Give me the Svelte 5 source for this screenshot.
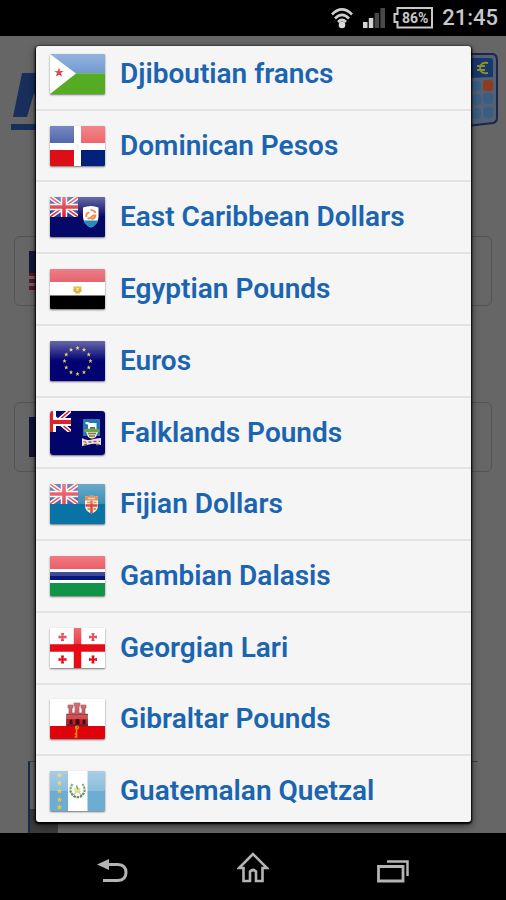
<script>
  const currencies = [
    { flag: 'dj', name: 'Djiboutian francs' },
    { flag: 'do', name: 'Dominican Pesos' },
    { flag: 'ai', name: 'East Caribbean Dollars' },
    { flag: 'eg', name: 'Egyptian Pounds' },
    { flag: 'eu', name: 'Euros' },
    { flag: 'fk', name: 'Falklands Pounds' },
    { flag: 'fj', name: 'Fijian Dollars' },
    { flag: 'gm', name: 'Gambian Dalasis' },
    { flag: 'ge', name: 'Georgian Lari' },
    { flag: 'gi', name: 'Gibraltar Pounds' },
    { flag: 'gt', name: 'Guatemalan Quetzal' }
  ];

  const euStars = Array.from({ length: 12 }, (_, i) => {
    const a = (i * Math.PI) / 6;
    return { x: 27.5 + 13 * Math.sin(a), y: 20 - 13 * Math.cos(a) };
  });
</script>

{#snippet unionJack(w, h)}
  <svg x="0" y="0" width={w} height={h} viewBox="0 0 28 20" preserveAspectRatio="none">
    <rect width="28" height="20" fill="#29358c" />
    <path d="M0 0L28 20M28 0L0 20" stroke="#fff" stroke-width="4.4" />
    <path d="M0 0L28 20M28 0L0 20" stroke="#d8242f" stroke-width="1.5" />
    <path d="M14 0V20M0 10H28" stroke="#fff" stroke-width="6.4" />
    <path d="M14 0V20M0 10H28" stroke="#dc2030" stroke-width="3.6" />
  </svg>
{/snippet}

{#snippet flagArt(code)}
  {#if code === 'dj'}
    <rect width="55" height="20" fill="#4d80c6" />
    <rect y="19" width="55" height="21" fill="#55ab22" />
    <path d="M0 0L26 19.5L0 40Z" fill="#fff" />
    <path d="M9 13.5l1.2 3.4h3.6l-2.9 2.2 1 3.5L9 20.5l-2.9 2.1 1-3.5-2.9-2.2h3.6z" fill="#e01a2b" />
  {:else if code === 'do'}
    <rect width="55" height="40" fill="#fff" />
    <rect width="24" height="17" fill="#1d3a94" />
    <rect x="31" width="24" height="17" fill="#e8383f" />
    <rect y="24" width="24" height="16" fill="#dc0f18" />
    <rect x="31" y="24" width="24" height="16" fill="#00217e" />
    <rect x="26" y="18.5" width="3" height="4" fill="#f2f0f2" />
  {:else if code === 'ai'}
    <rect width="55" height="40" fill="#040868" />
    {@render unionJack(28, 20)}
    <path d="M33 10.500Q41 7.500 48.500 10.500V20Q48 27.500 41 30.500Q33.500 27.500 33 20Z" fill="#fff" />
    <path d="M33.500 23.500H48.300Q46.500 28.500 41 30.500Q35.500 28.500 33.500 23.500Z" fill="#238bc0" />
    <path d="M36.500 20q-1-4 3-4.500m1-2.500q4 0 5 3m0 1.500q0 4-4 4.500m-4-1q2 1.500 4-1t3-1" fill="none" stroke="#ef8a4a" stroke-width="2" />
  {:else if code === 'eg'}
    <rect width="55" height="13.500" fill="#de2a39" />
    <rect y="13" width="55" height="14" fill="#fff" />
    <rect y="26.500" width="55" height="13.500" fill="#000" />
    <path d="M23.500 17q1.500 1.500 4 0q2.500 1.500 4 0v6h-2l.500 1.500h-5l.500-1.500h-2z" fill="#d9b031" />
    <path d="M26.500 19h2v3h-2z" fill="#f3e3a6" />
  {:else if code === 'eu'}
    <rect width="55" height="40" fill="#020273" />
    {#each euStars as s}
      <path transform="translate({s.x} {s.y})" d="M0-2.200L.6-.7 2.100-.7.9.3 1.400 1.900 0 1-1.400 1.900-.9.3-2.100-.7-.6-.7Z" fill="#e4cc4c" />
    {/each}
  {:else if code === 'fk'}
    <rect width="55" height="44" fill="#03046a" />
    <g clip-path="url(#fk-canton)">
      <path d="M-6 -2L22 22M22 -2L-6 22" stroke="#fff" stroke-width="4.500" />
      <path d="M-6 -2L22 22M22 -2L-6 22" stroke="#e0202a" stroke-width="1.500" />
      <path d="M2 0V21M0 11H21" stroke="#fff" stroke-width="8" />
      <path d="M1 0V21M0 11H21" stroke="#e0202a" stroke-width="4" />
    </g>
    <clipPath id="fk-canton"><rect width="21" height="21" /></clipPath>
    <rect x="33" y="8" width="17" height="17" fill="#2377b8" />
    <path d="M35.500 11h2.500l1.500 1h7v6h-1.500v-2h-5v2H38v-4.500l-2.500-.500z" fill="#fff" />
    <path d="M34 18.500q8-2 15.500 0V21H34z" fill="#79a342" />
    <path d="M36 21h12l-2 5q-4 3-8 0z" fill="#ede4c0" />
    <path d="M38 22.500h8M39 25h6" stroke="#7c7854" stroke-width="1.300" />
    <path d="M32 27q4 3 9.500 1.500T51 27v7q-5-2-9.500-1T32 35z" fill="#ece3df" />
    <path d="M33.500 30.500l3 1m2-.500h3m2-.500h3m2-.500l1.500.500M34 33.500h3m9 0h3" stroke="#a05e62" stroke-width="1.300" />
  {:else if code === 'fj'}
    <rect width="55" height="40" fill="#0873a4" />
    {@render unionJack(28, 20)}
    <path d="M35 12.500q6.500-1.500 13 0v10q-.500 5-6.500 7q-6-2-6.500-7z" fill="#f8eadc" />
    <path d="M35 12.500q6.500-1.500 13 0v4H35z" fill="#df652f" />
    <path d="M38 14.500h7" stroke="#f6c65d" stroke-width="1.500" />
    <path d="M41.500 16.500V29M35.500 21.500h12" stroke="#e34535" stroke-width="2.500" />
    <path d="M37 18.500h3m3.500 0h3M37.500 25h2.500m3.500 0h2.500" stroke="#a08a48" stroke-width="1.700" />
  {:else if code === 'gm'}
    <rect width="55" height="40" fill="#fff" />
    <rect width="55" height="13" fill="#e5222e" />
    <rect y="16" width="55" height="8" fill="#07187c" />
    <rect y="27" width="55" height="13" fill="#129448" />
  {:else if code === 'ge'}
    <rect width="55" height="40" fill="#fff" />
    <path d="M27.500 0V40M0 20H55" stroke="#e50c18" stroke-width="7.500" />
    {#each [[12.500, 9], [43, 9], [12.500, 31.500], [43, 31.500]] as [x, y]}
      <path transform="translate({x} {y})" d="M-1.600-4h3.200L1-1 4-1.600v3.200L1 1l.6 3h-3.200L-1 1l-3 .6v-3.200L-1-1z" fill="#e50c18" />
    {/each}
  {:else if code === 'gi'}
    <rect width="55" height="40" fill="#fff" />
    <rect y="27" width="55" height="13" fill="#e0030c" />
    <path d="M16.500 27V15h2.500V9h-1V6h5v3h-1v5h3V7h-1V4h6v3h-1v7h3V9h-1V6h5v3h-1v6h2.500v12z" fill="#c71c23" stroke="#66272a" stroke-width=".7" />
    <path d="M17 15.500h21M17 26h21" stroke="#5a1517" />
    <path d="M19.500 25v-3.500q1.500-2 3 0V25zM25.500 25.500V21q2-2.500 4 0v4.500zM32.500 25v-3.500q1.500-2 3 0V25z" fill="#351214" />
    <path d="M26.500 27v11h-2M26.500 35h-2" fill="none" stroke="#e58b13" stroke-width="1.600" />
    <circle cx="27" cy="28.500" r="1.500" fill="none" stroke="#e58b13" stroke-width="1.200" />
  {:else if code === 'gt'}
    <rect width="55" height="40" fill="#6dadd2" />
    <rect x="18" width="19.500" height="40" fill="#fff" />
    {#each [4, 12, 20, 28.500, 36] as y}
      <path transform="translate(9.500 {y})" d="M0-2.800L.8-.8 2.900-.8 1.200.6 1.800 2.600 0 1.400-1.800 2.600-1.200.6-2.900-.8-.8-.8Z" fill="#e8c93c" />
    {/each}
    <path d="M22.500 13q-5 7.500 2 12.500q3 1.500 6 0q7-5 2-12.500" fill="none" stroke="#5d8f57" stroke-width="2.200" stroke-dasharray="2.500 .8" />
    <path d="M23.500 24l7-7m1 7l-7-7" stroke="#a8a26c" />
    <path d="M24 18.500l3-3 4 5.500-6 1z" fill="#ecd77c" />
    <path d="M26.500 14.500l1.500 4" stroke="#39985e" stroke-width="1.500" />
  {/if}
{/snippet}

<div class="phone">
  <header class="status">
    <svg class="wifi" viewBox="0 0 22 21" aria-label="Wi-Fi">
      <g fill="none" stroke="#cfcfcf" stroke-width="2.600">
        <path d="M1 6.500q10-10 20 0" />
        <path d="M4 10.500q7-7 14 0" />
        <path d="M7 14q4-4 8 0" />
      </g>
      <circle cx="11" cy="17" r="3.300" fill="#dcdcdc" />
    </svg>
    <svg class="signal" viewBox="0 0 22 20" aria-label="Signal">
      <path d="M0 14h4.500v6H0zM5.800 10h4.500v10H5.800z" fill="#d4d4d4" />
      <path d="M11.600 5h4.500v15h-4.500zM17.400 0H22v20h-4.600z" fill="#484848" />
    </svg>
    <span class="battery">
      <svg viewBox="0 0 40 22" aria-hidden="true">
        <path d="M4.500 1H39v19.500H4.500V15H1.500V7h3z" fill="none" stroke="#c9c9c9" stroke-width="2" />
      </svg>
      <span>86%</span>
    </span>
    <time>21:45</time>
  </header>

  <main class="stage">
    <div class="app" aria-hidden="true">
      <div class="banner">
        <svg class="logo" viewBox="0 0 60 58">
          <path d="M11 0H28L38 25 51 0H60V44H46L48 22 38 44H31L23 20 16 44H2Z" fill="#182f5c" />
          <path d="M0 51H60V57H0Z" fill="#182f5c" />
        </svg>
        <svg class="calculator" viewBox="0 0 60 76">
          <path d="M3 1H55Q59 2 59 7V65Q59 69 55 70L3 76Z" fill="#546076" stroke="#1b2847" stroke-width="2" />
          <path d="M5 5H52Q55 5 55 8V24L5 26Z" fill="#17386d" />
          <path d="M50 10q-8-1-8 5t8 5M39 13h8m-8 4h8" fill="none" stroke="#8b902d" stroke-width="2" />
          <g fill="#385f82">
            <rect x="34" y="28" width="9" height="10" rx="4" />
            <rect x="34" y="41" width="9" height="11" rx="4" />
            <rect x="45" y="40" width="10" height="11" rx="4" />
            <rect x="34" y="55" width="9" height="11" rx="4" />
            <rect x="45" y="54" width="10" height="11" rx="4" />
          </g>
          <rect x="45" y="27" width="10" height="11" rx="3" fill="#8c3d1d" />
        </svg>
      </div>
      <div class="field us"><i></i></div>
      <div class="field eu"><i></i></div>
      <div class="advert"><i></i></div>
    </div>

    <div class="overlay">
      <div class="dialog" role="dialog" aria-label="Currency">
        <ul>
          {#each currencies as c}
            <li>
              <button type="button">
                <svg
                  class="flag"
                  class:tall={c.flag === 'fk'}
                  viewBox={c.flag === 'fk' ? '0 0 55 44' : '0 0 55 40'}
                  aria-hidden="true"
                >
                  <defs>
                    <linearGradient id="gloss-{c.flag}" x1="0" y1="0" x2="0" y2="1">
                      <stop offset="0" stop-color="#fff" stop-opacity=".4" />
                      <stop offset="1" stop-color="#fff" stop-opacity={['eu', 'ai'].includes(c.flag) ? 0 : 0.2} />
                    </linearGradient>
                  </defs>
                  {@render flagArt(c.flag)}
                  {#if c.flag !== 'fk'}
                    <rect width="55" height={c.flag === 'ge' ? 16 : 20} fill="url(#gloss-{c.flag})" />
                  {/if}
                </svg>
                <span>{c.name}</span>
              </button>
            </li>
          {/each}
        </ul>
      </div>
    </div>
  </main>

  <nav class="keys">
    <button type="button" aria-label="Back">
      <svg viewBox="0 0 32 26">
        <path d="M10 6.500H21Q29 7 29 14.500T21 22.500H6" fill="none" stroke="#b4b4b4" stroke-width="3" />
        <path d="M0 6.500L12 1V12Z" fill="#b4b4b4" />
      </svg>
    </button>
    <button type="button" aria-label="Home">
      <svg class="home" viewBox="0 0 32 31">
        <path d="M16 2L2 16H6.500V29H13V19.500Q16 16.500 19 19.500V29H25.500V16H30Z" fill="none" stroke="#b4b4b4" stroke-width="2.600" />
      </svg>
    </button>
    <button type="button" aria-label="Recent apps">
      <svg viewBox="0 0 32 24">
        <path d="M1.500 7.500H26V22H1.500Z" fill="none" stroke="#b4b4b4" stroke-width="2.800" />
        <path d="M10 2.500H30.500V17" fill="none" stroke="#b4b4b4" stroke-width="2.500" />
      </svg>
    </button>
  </nav>
</div>

<style>
  :global(body) {
    margin: 0;
    background: #000;
  }
  .phone {
    display: flex;
    flex-direction: column;
    height: 100vh;
    background: #000;
    font-family: Roboto, 'Liberation Sans', sans-serif;
  }
  .status {
    display: flex;
    align-items: center;
    justify-content: flex-end;
    flex: none;
    height: 36px;
    padding-right: 8px;
    box-sizing: border-box;
    color: #c8c8c8;
  }
  .wifi {
    width: 22px;
    height: 21px;
    margin-right: 10px;
  }
  .signal {
    width: 22px;
    height: 20px;
    margin-right: 8px;
  }
  .battery {
    display: grid;
    width: 40px;
    height: 22px;
    margin-right: 9px;
  }
  .battery > * {
    grid-area: 1 / 1;
  }
  .battery span {
    padding-left: 4px;
    font-size: 14px;
    font-weight: 700;
    line-height: 22px;
    text-align: center;
  }
  time {
    font-size: 22px;
    font-weight: 500;
    line-height: 36px;
  }
  .stage {
    display: grid;
    flex: 1;
    min-height: 0;
    background: #666;
    overflow: hidden;
  }
  .app,
  .overlay {
    grid-area: 1 / 1;
    min-height: 0;
    min-width: 0;
  }
  .app {
    display: flex;
    flex-direction: column;
  }
  .banner {
    display: flex;
    justify-content: space-between;
    height: 200px;
    padding: 17px 8px 0 11px;
    box-sizing: border-box;
  }
  .logo {
    width: 60px;
    height: 58px;
    margin-top: 20px;
  }
  .calculator {
    width: 60px;
    height: 76px;
  }
  .field {
    display: flex;
    align-items: center;
    height: 70px;
    margin: 0 14px 96px;
    padding-left: 14px;
    border: 1px solid #515551;
    border-radius: 6px;
    box-sizing: border-box;
  }
  .field i {
    width: 55px;
    height: 40px;
  }
  .us i {
    background: linear-gradient(#14183c 55%, transparent 55%),
      repeating-linear-gradient(#591a24 0 4px, #6e6468 4px 7px);
  }
  .eu i {
    background: #111339;
  }
  .advert {
    display: flex;
    align-items: flex-end;
    height: 72px;
    margin: auto 28px 0;
    border-top: 1px solid #444;
    border-left: 2px solid #17294d;
    box-sizing: border-box;
  }
  .advert i {
    width: 28px;
    height: 24px;
    background: #3b3b3b;
  }
  .overlay {
    display: flex;
    padding: 10px 35px 11px 36px;
    z-index: 1;
  }
  .dialog {
    display: flex;
    flex: 1;
    min-width: 0;
    background: #f5f5f5;
    border-radius: 3px;
    box-shadow: 0 1px 2px 1px #000, 0 3px 8px #0009;
    overflow: hidden;
  }
  ul {
    display: flex;
    flex-direction: column;
    flex: 1;
    min-width: 0;
    margin: -7px 0 -6px;
    padding: 0;
    list-style: none;
  }
  li {
    display: flex;
    flex: 1 1 0;
    min-height: 0;
    border-bottom: 2px solid #e3e3e3;
  }
  li button {
    display: flex;
    align-items: center;
    gap: 15px;
    flex: 1;
    min-width: 0;
    padding: 0 14px;
    border: 0;
    background: none;
    color: #1b64b0;
    font: 600 28px/32px Roboto, 'Liberation Sans', sans-serif;
    text-align: left;
    white-space: nowrap;
  }
  .flag {
    flex: none;
    width: 55px;
    height: 40px;
    border-radius: 1px;
    box-shadow: 0 1px 2px #0008;
  }
  .flag.tall {
    height: 44px;
    border-radius: 3px;
  }
  .keys {
    display: flex;
    justify-content: center;
    gap: 28px;
    flex: none;
    height: 67px;
  }
  .keys button {
    display: flex;
    align-items: center;
    justify-content: center;
    width: 112px;
    padding: 8px 0 0;
    border: 0;
    background: none;
  }
  .keys svg {
    width: 32px;
    height: 26px;
  }
  .keys .home {
    height: 31px;
    margin-bottom: 6px;
  }
</style>
